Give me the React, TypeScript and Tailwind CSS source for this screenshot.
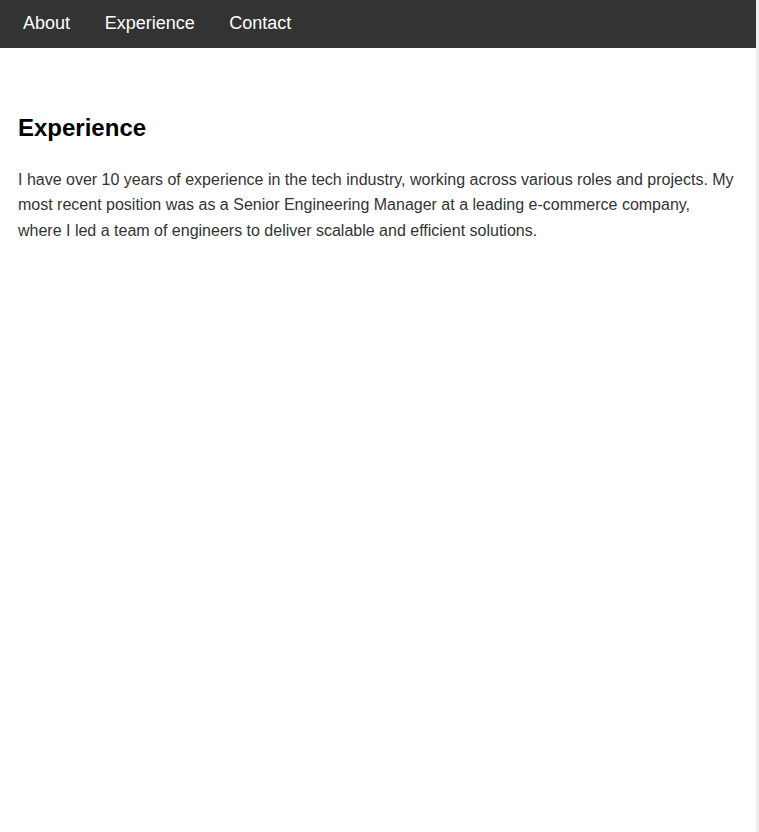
const links = ["About", "Experience", "Contact"];

export default function App() {
  return (
    <div className="flex min-h-[832px] bg-white font-['Liberation_Sans',Arial,sans-serif]">
      <div className="min-w-0 flex-1">
        <nav className="flex h-12 items-center gap-[34.6px] bg-[#333333] px-[23px] pb-[2px]">
          {links.map((link) => (
            <a key={link} href="#" className="text-[18px] text-white">
              {link}
            </a>
          ))}
        </nav>

        <section className="px-[18px] pt-[62px]">
          <h2 className="text-[24px] font-bold text-black">Experience</h2>
          <p className="mt-[21px] text-[16px] leading-[25.4px] text-[#333333]">
            I have over 10 years of experience in the tech industry, working
            across various roles and projects. My most recent position was as a
            Senior Engineering Manager at a leading e-commerce company, where I
            led a team of engineers to deliver scalable and efficient solutions.
          </p>
        </section>
      </div>
      <div className="w-[3px] shrink-0 bg-[#eeeeee]" />
    </div>
  );
}
